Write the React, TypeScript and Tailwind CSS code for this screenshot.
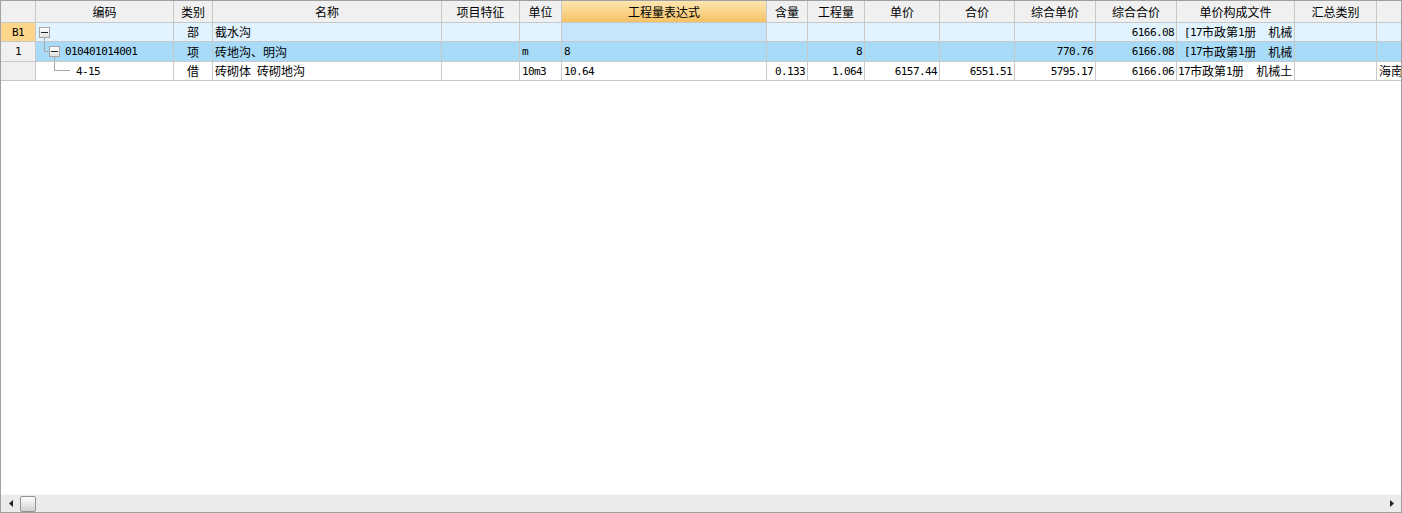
import React from "react";

const GRID =
  "grid grid-cols-[35px_138px_39px_229px_78px_42px_205px_41px_57px_75px_75px_81px_81px_118px_82px_24px]";

function Txt({ t }: { t: string }) {
  const parts = t.split(/([\x00-\x7f]+)/).filter(Boolean);
  return (
    <>
      {parts.map((p, i) =>
        /^[\x00-\x7f]+$/.test(p) ? (
          <span
            key={i}
            className="font-['DejaVu_Sans_Mono',monospace] text-[11px] tracking-[-0.6px] whitespace-pre"
          >
            {p}
          </span>
        ) : (
          <span key={i} className="font-['Noto_Sans_CJK_SC',sans-serif] text-[12px] whitespace-pre">
            {p}
          </span>
        )
      )}
    </>
  );
}

function Box() {
  return (
    <div className="w-[11px] h-[11px] border border-[#a4a4a4] bg-linear-to-b from-white to-[#e2e2e2] flex items-center justify-center">
      <div className="w-[7px] h-[1px] bg-[#222]" />
    </div>
  );
}

type Cell = { t?: string; a?: "l" | "c" | "r"; bg?: string; node?: React.ReactNode; pl?: string };

const headers = [
  "",
  "编码",
  "类别",
  "名称",
  "项目特征",
  "单位",
  "工程量表达式",
  "含量",
  "工程量",
  "单价",
  "合价",
  "综合单价",
  "综合合价",
  "单价构成文件",
  "汇总类别",
  "",
];

const tree1 = (
  <>
    <div className="absolute left-[3px] top-[4px]">
      <Box />
    </div>
    <div className="absolute left-[8px] top-[15px] bottom-0 w-px bg-[#a8a8a8]" />
  </>
);

const tree2 = (
  <>
    <div className="absolute left-[8px] top-0 h-[9px] w-px bg-[#a8a8a8]" />
    <div className="absolute left-[8px] top-[9px] w-[5px] h-px bg-[#a8a8a8]" />
    <div className="absolute left-[13px] top-[4px]">
      <Box />
    </div>
    <div className="absolute left-[18px] top-[15px] bottom-0 w-px bg-[#a8a8a8]" />
    <div className="absolute left-[29px] top-0 bottom-0 flex items-center">
      <Txt t="010401014001" />
    </div>
  </>
);

const tree3 = (
  <>
    <div className="absolute left-[18px] top-0 h-[8px] w-px bg-[#a8a8a8]" />
    <div className="absolute left-[18px] top-[8px] w-[16px] h-px bg-[#a8a8a8]" />
    <div className="absolute left-[40px] top-0 bottom-0 flex items-center">
      <Txt t="4-15" />
    </div>
  </>
);

type Row = { rh: string; rhBg: string; bg: string; h: string; cells: Cell[] };

const rows: Row[] = [
  {
    rh: "B1",
    rhBg: "bg-[#fdd68b]",
    bg: "bg-[#e1f3fe]",
    h: "h-[19px]",
    cells: [
      { node: tree1 },
      { t: "部", a: "c" },
      { t: "截水沟" },
      {},
      {},
      { bg: "bg-[#c7e6fb]" },
      {},
      {},
      {},
      {},
      {},
      { t: "6166.08", a: "r" },
      { t: " [17市政第1册  机械", pl: "pl-[1px]" },
      {},
      {},
    ],
  },
  {
    rh: "1",
    rhBg: "bg-[#f0f0f0]",
    bg: "bg-[#a8dbf8]",
    h: "h-[20px]",
    cells: [
      { node: tree2 },
      { t: "项", a: "c" },
      { t: "砖地沟、明沟" },
      {},
      { t: "m" },
      { t: "8" },
      {},
      { t: "8", a: "r" },
      {},
      {},
      { t: "770.76", a: "r" },
      { t: "6166.08", a: "r" },
      { t: " [17市政第1册  机械", pl: "pl-[1px]" },
      {},
      {},
    ],
  },
  {
    rh: "",
    rhBg: "bg-[#f0f0f0]",
    bg: "bg-white",
    h: "h-[19px]",
    cells: [
      { node: tree3 },
      { t: "借", a: "c" },
      { t: "砖砌体 砖砌地沟" },
      {},
      { t: "10m3" },
      { t: "10.64" },
      { t: "0.133", a: "r" },
      { t: "1.064", a: "r" },
      { t: "6157.44", a: "r" },
      { t: "6551.51", a: "r" },
      { t: "5795.17", a: "r" },
      { t: "6166.06", a: "r" },
      { t: "17市政第1册  机械土", pl: "pl-[1px]" },
      {},
      { t: "海南" },
    ],
  },
];

export default function App() {
  return (
    <div className="w-[1402px] h-[513px] border border-[#a0a0a0] bg-white flex flex-col overflow-hidden text-black">
      <div className="flex-1 flex flex-col">
        {/* header */}
        <div className={`${GRID} h-[22px]`}>
          {headers.map((h, i) => {
            const sel = i === 6;
            const last = i === headers.length - 1;
            return (
              <div
                key={i}
                className={`flex items-center justify-center overflow-hidden whitespace-nowrap border-b border-[#c8c8c8] leading-none ${
                  last ? "" : "border-r"
                } ${sel ? "bg-linear-to-b from-[#fde5b0] to-[#f5c263]" : "bg-[#f0f0f0]"}`}
              >
                <span className="font-['Noto_Sans_CJK_SC',sans-serif] text-[12px]">{h}</span>
              </div>
            );
          })}
        </div>
        {rows.map((r, ri) => (
          <div key={ri} className={`${GRID} ${r.h}`}>
            <div
              className={`flex items-center justify-center border-r border-b border-[#c8c8c8] leading-none ${r.rhBg}`}
            >
              <Txt t={r.rh} />
            </div>
            {r.cells.map((c, ci) => {
              const last = ci === r.cells.length - 1;
              const align =
                c.a === "c" ? "justify-center" : c.a === "r" ? "justify-end pr-[2px]" : `justify-start ${c.pl ?? "pl-[2px]"}`;
              return (
                <div
                  key={ci}
                  className={`relative flex items-center overflow-hidden whitespace-nowrap border-b border-[#c8c8c8] leading-none ${
                    last ? "" : "border-r"
                  } ${c.bg ?? r.bg} ${align}`}
                >
                  {c.node ? c.node : c.t ? <Txt t={c.t} /> : null}
                </div>
              );
            })}
          </div>
        ))}
      </div>
      {/* horizontal scrollbar */}
      <div className="h-[18px] bg-[#ebebeb] border-t border-[#f5f5f5] flex items-center">
        <svg className="ml-[8px]" width="4" height="7" viewBox="0 0 4 7">
          <polygon points="4,0 0,3.5 4,7" fill="#222" />
        </svg>
        <div className="ml-[7px] w-[16px] h-[16px] rounded-[2px] border border-[#939393] bg-linear-to-b from-[#fdfdfd] to-[#d2d2d2]" />
        <div className="flex-1" />
        <svg className="mr-[7px]" width="4" height="7" viewBox="0 0 4 7">
          <polygon points="0,0 4,3.5 0,7" fill="#222" />
        </svg>
      </div>
    </div>
  );
}
